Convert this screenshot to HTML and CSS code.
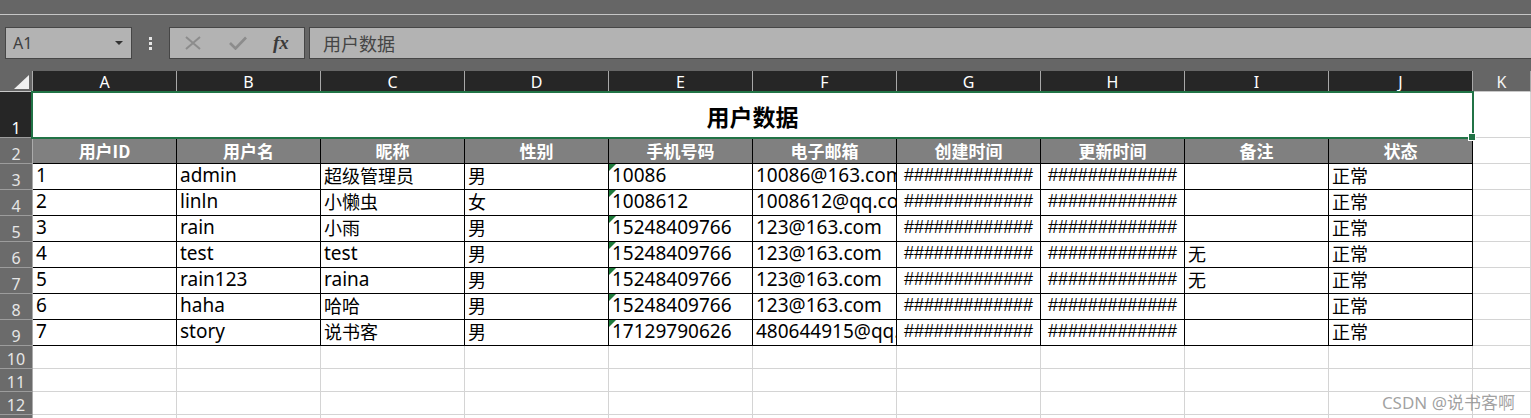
FILE: index.html
```html
<!DOCTYPE html>
<html lang="zh-CN">
<head>
<meta charset="utf-8">
<title>用户数据</title>
<link rel="stylesheet" href="styles.css">
</head>
<body>
<div class="toolbar">
  <div class="tb-top"></div>
  <div class="fbar">
    <div class="namebox"><span>A1</span><span class="caret"></span></div>
    <div class="dots"><i></i><i></i><i></i></div>
    <div class="fxbox">
      <svg class="ico" width="18" height="14" viewBox="0 0 18 14"><path d="M2 1 L16 13 M16 1 L2 13" stroke="#8c8c8c" stroke-width="2" fill="none"/></svg>
      <svg class="ico" width="18" height="14" viewBox="0 0 18 14"><path d="M1 7 L6.5 12.5 L17 1.5" stroke="#8c8c8c" stroke-width="2.6" fill="none"/></svg>
      <span class="fx">fx</span>
    </div>
    <div class="finput">用户数据</div>
  </div>
</div>

<div class="sheet">
  <div class="corner"><span class="tri-w"></span></div>
  <div class="ch sel">A</div><div class="ch sel">B</div><div class="ch sel">C</div><div class="ch sel">D</div><div class="ch sel">E</div>
  <div class="ch sel">F</div><div class="ch sel">G</div><div class="ch sel">H</div><div class="ch sel">I</div><div class="ch sel">J</div>
  <div class="ch">K</div>

  <div class="rh sel">1</div>
  <div class="title">用户数据<span class="handle"></span></div>
  <div class="c"></div>

  <div class="rh">2</div>
  <div class="th">用户ID</div><div class="th">用户名</div><div class="th">昵称</div><div class="th">性别</div><div class="th">手机号码</div>
  <div class="th">电子邮箱</div><div class="th">创建时间</div><div class="th">更新时间</div><div class="th">备注</div><div class="th">状态</div>
  <div class="c"></div>

  <div class="rh">3</div>
  <div class="d">1</div><div class="d">admin</div><div class="d zh">超级管理员</div><div class="d zh">男</div><div class="d tri">10086</div>
  <div class="d clip">10086@163.com</div><div class="d hs">#############</div><div class="d hs">#############</div><div class="d"></div><div class="d zh">正常</div>
  <div class="c"></div>

  <div class="rh">4</div>
  <div class="d">2</div><div class="d">linln</div><div class="d zh">小懒虫</div><div class="d zh">女</div><div class="d tri">1008612</div>
  <div class="d clip">1008612@qq.com</div><div class="d hs">#############</div><div class="d hs">#############</div><div class="d"></div><div class="d zh">正常</div>
  <div class="c"></div>

  <div class="rh">5</div>
  <div class="d">3</div><div class="d">rain</div><div class="d zh">小雨</div><div class="d zh">男</div><div class="d tri">15248409766</div>
  <div class="d">123@163.com</div><div class="d hs">#############</div><div class="d hs">#############</div><div class="d"></div><div class="d zh">正常</div>
  <div class="c"></div>

  <div class="rh">6</div>
  <div class="d">4</div><div class="d">test</div><div class="d">test</div><div class="d zh">男</div><div class="d tri">15248409766</div>
  <div class="d">123@163.com</div><div class="d hs">#############</div><div class="d hs">#############</div><div class="d zh">无</div><div class="d zh">正常</div>
  <div class="c"></div>

  <div class="rh">7</div>
  <div class="d">5</div><div class="d">rain123</div><div class="d">raina</div><div class="d zh">男</div><div class="d tri">15248409766</div>
  <div class="d">123@163.com</div><div class="d hs">#############</div><div class="d hs">#############</div><div class="d zh">无</div><div class="d zh">正常</div>
  <div class="c"></div>

  <div class="rh">8</div>
  <div class="d">6</div><div class="d">haha</div><div class="d zh">哈哈</div><div class="d zh">男</div><div class="d tri">15248409766</div>
  <div class="d">123@163.com</div><div class="d hs">#############</div><div class="d hs">#############</div><div class="d"></div><div class="d zh">正常</div>
  <div class="c"></div>

  <div class="rh">9</div>
  <div class="d">7</div><div class="d">story</div><div class="d zh">说书客</div><div class="d zh">男</div><div class="d tri">17129790626</div>
  <div class="d clip">480644915@qq.com</div><div class="d hs">#############</div><div class="d hs">#############</div><div class="d"></div><div class="d zh">正常</div>
  <div class="c"></div>

  <div class="rh">10</div>
  <div class="c"></div><div class="c"></div><div class="c"></div><div class="c"></div><div class="c"></div><div class="c"></div><div class="c"></div><div class="c"></div><div class="c"></div><div class="c"></div><div class="c"></div>

  <div class="rh">11</div>
  <div class="c"></div><div class="c"></div><div class="c"></div><div class="c"></div><div class="c"></div><div class="c"></div><div class="c"></div><div class="c"></div><div class="c"></div><div class="c"></div><div class="c"></div>

  <div class="rh">12</div>
  <div class="c"></div><div class="c"></div><div class="c"></div><div class="c"></div><div class="c"></div><div class="c"></div><div class="c"></div><div class="c"></div><div class="c"></div><div class="c"></div><div class="c"></div>

  <div class="rh">13</div>
  <div class="c"></div><div class="c"></div><div class="c"></div><div class="c"></div><div class="c"></div><div class="c"></div><div class="c"></div><div class="c"></div><div class="c"></div><div class="c"></div><div class="c"></div>
</div>

<div class="watermark">CSDN @说书客啊</div>
</body>
</html>
```

FILE: styles.css
```css
* { box-sizing: border-box; margin: 0; padding: 0; }
html, body { width: 1531px; height: 418px; overflow: hidden; background: #fff; }
body { font-family: "Noto Sans", "Noto Sans CJK SC", sans-serif; position: relative; }

/* ---------- toolbar ---------- */
.toolbar { height: 71px; background: #666; display: flex; flex-direction: column; }
.tb-top { height: 15px; border-bottom: 1px solid #c6c6c6; }
.fbar { display: flex; height: 32px; margin-top: 12px; padding-left: 5px; }
.namebox {
  width: 127px; background: #b3b3b3; border: 1px solid #464646;
  display: flex; align-items: center; justify-content: space-between;
  padding: 0 8px 0 7px; font-size: 16px; color: #3f3f3f;
}
.caret { width: 0; height: 0; border-left: 4px solid transparent; border-right: 4px solid transparent; border-top: 4px solid #333; }
.dots { width: 37px; display: flex; flex-direction: column; align-items: center; justify-content: center; gap: 2px; padding-top: 1px; }
.dots i { display: block; width: 3px; height: 3px; background: #e6e6e6; }
.fxbox {
  width: 136px; background: #b3b3b3; border: 1px solid #464646;
  display: flex; align-items: center; padding-left: 14px; gap: 27px;
}
.ico { display: block; }
.fx { font-family: "Liberation Serif", "DejaVu Serif", serif; font-style: italic; font-weight: bold; font-size: 19px; color: #3a3a3a; margin-left: -1px; }
.finput {
  flex: 1; margin-left: 4px; background: #b3b3b3; border: 1px solid #464646; border-right: none;
  font-family: "Noto Sans CJK SC", sans-serif; font-size: 18px; color: #454545;
  display: flex; align-items: center; padding-left: 13px; line-height: 1;
}

/* ---------- sheet grid ---------- */
.sheet {
  display: grid;
  grid-template-columns: 33px repeat(10, 144px) 1fr;
  grid-template-rows: 21px 46px repeat(8, 26px) repeat(3, 23px) 1fr;
  height: 347px;
}
.sheet > div { border-right: 1px solid #d4d4d4; border-bottom: 1px solid #d4d4d4; white-space: nowrap; min-width: 0; }

.corner { background: #666; border-right-color: #adadad !important; border-bottom-color: #c8c8c8 !important; position: relative; }
.tri-w { position: absolute; right: 3px; bottom: 2px; width: 0; height: 0; border-left: 15px solid transparent; border-bottom: 14px solid #f0f0f0; }

.ch {
  background: #666; color: #f4f4f4; font-size: 16px; line-height: 18px;
  display: flex; align-items: flex-end; justify-content: center;
  border-right-color: #a8a8a8 !important; border-bottom-color: #c8c8c8 !important;
}
.ch.sel { background: #262626; color: #fff; }

.rh {
  background: #6b6b6b; color: #e6e6e6; font-size: 16px; line-height: 18px;
  display: flex; align-items: flex-end; justify-content: center;
  border-right-color: #ababab !important; border-bottom-color: #9c9c9c !important;
}
.rh.sel { background: #262626; color: #fff; }

.title {
  grid-column: 2 / span 10;
  border: 2px solid #217346 !important;
  margin: -1px -1px -1px -2px;
  position: relative; z-index: 2;
  display: flex; align-items: center; justify-content: center;
  font-family: "Noto Sans CJK SC", sans-serif; font-weight: bold; font-size: 23px; color: #000;
  padding-top: 1px;
}
.handle { position: absolute; right: -4px; bottom: -4px; width: 6px; height: 6px; background: #217346; border: 1px solid #fff; box-sizing: content-box; }

.th {
  background: #808080; color: #fff; border-color: #000 !important;
  font-family: "Noto Sans CJK SC", sans-serif; font-weight: bold; font-size: 17px;
  display: flex; align-items: center; justify-content: center; line-height: 1;
}

.d {
  border-color: #000 !important; color: #000;
  font-size: 19px; line-height: 23px; padding-left: 3px;
  position: relative;
}
.d.clip { overflow: hidden; }
.d.zh { font-family: "Noto Sans CJK SC", sans-serif; font-size: 18px; padding-left: 3px; }
.d.hs {
  text-align: center; padding-left: 0;
  font-family: "Liberation Sans", Arial, sans-serif; font-size: 18px; letter-spacing: -0.1px; line-height: 23px;
}
.d.tri::before {
  content: ""; position: absolute; left: 0; top: 0; width: 0; height: 0;
  border-top: 7px solid #1e7a3b; border-right: 7px solid transparent;
}

.watermark {
  position: absolute; right: 16px; bottom: 7px;
  font-family: "Noto Sans", "Noto Sans CJK SC", sans-serif; font-size: 17px; line-height: 1;
  color: rgba(120, 120, 120, 0.7);
}
```
